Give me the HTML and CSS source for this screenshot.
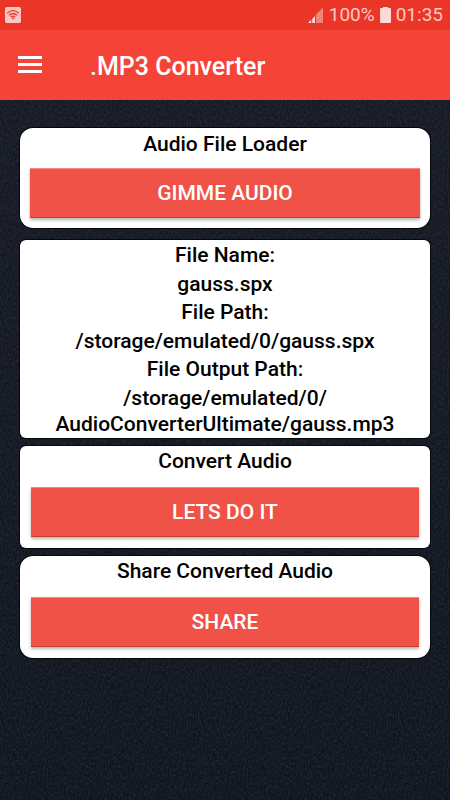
FILE: index.html
```html
<!DOCTYPE html>
<html lang="en">
<head>
    <meta charset="UTF-8">
    <meta name="viewport" content="width=device-width, initial-scale=1.0">
    <title>.MP3 Converter</title>
    <link rel="stylesheet" href="styles.css">
</head>
<body>
    <div class="status-bar">
        <svg class="wifi-icon" width="16" height="16" viewBox="0 0 16 16">
            <rect width="16" height="16" rx="2" fill="#fbc7c3"/>
            <g fill="none" stroke="#ee3a2b" stroke-width="1.3">
                <path d="M2.2 6.2Q8 1 13.8 6.2"/>
                <path d="M4 8.3Q8 4.8 12 8.3"/>
                <path d="M5.7 10.2Q8 8.3 10.3 10.2"/>
            </g>
            <path d="M6.6 11.3Q8 10.4 9.4 11.3L8 12.8z" fill="#ee3a2b"/>
        </svg>
        <div class="status-right">
            <svg class="signal-icon" width="16" height="16" viewBox="0 0 16 16">
                <path d="M15 0.5V16H8V7.5z" fill="#f4837a"/>
                <path d="M3.2 12.8V16H0z" fill="#fddad7"/>
                <path d="M7 9V16H4.2V12z" fill="#fddad7"/>
            </svg>
            <span>100%</span>
            <svg class="battery-icon" width="11" height="16" viewBox="0 0 11 16">
                <path d="M3 0h5v1h2a1 1 0 0 1 1 1V15a1 1 0 0 1-1 1H1a1 1 0 0 1-1-1V2a1 1 0 0 1 1-1h2z" fill="#fddad7"/>
            </svg>
            <span>01:35</span>
        </div>
    </div>
    <header class="toolbar">
        <button class="menu-button" aria-label="Menu">
            <svg width="24" height="18" viewBox="0 0 24 18">
                <path d="M0 0h24v3H0zM0 7h24v3H0zM0 14h24v3H0z" fill="#fff"/>
            </svg>
        </button>
        <h1>.MP3 Converter</h1>
    </header>
    <main class="content">
        <section class="card card-round card-loader">
            <h2>Audio File Loader</h2>
            <button class="action">GIMME AUDIO</button>
        </section>
        <dl class="card file-info">
            <div>
                <dt>File Name:</dt>
                <dd>gauss.spx</dd>
            </div>
            <div>
                <dt>File Path:</dt>
                <dd>/storage/emulated/0/gauss.spx</dd>
            </div>
            <div>
                <dt>File Output Path:</dt>
                <dd>/storage/emulated/0/<wbr>AudioConverterUltimate/gauss.mp3</dd>
            </div>
        </dl>
        <section class="card">
            <h2>Convert Audio</h2>
            <button class="action">LETS DO IT</button>
        </section>
        <section class="card card-round">
            <h2>Share Converted Audio</h2>
            <button class="action">SHARE</button>
        </section>
    </main>
</body>
</html>
```

FILE: styles.css
```css
* {
    box-sizing: border-box;
}
body {
    font-family: Roboto, "Liberation Sans", sans-serif;
    margin: 0;
    min-height: 100vh;
    background-color: #181d27;
    /* fabric grain over a soft dark fade */
    background-image: url("data:image/svg+xml,%3Csvg xmlns='http://www.w3.org/2000/svg' width='200' height='200'%3E%3Cfilter id='n' x='0' y='0' width='1' height='1' color-interpolation-filters='sRGB'%3E%3CfeTurbulence type='fractalNoise' baseFrequency='.7 .35' numOctaves='2' stitchTiles='stitch'/%3E%3CfeColorMatrix values='0 0 0 0 .4 0 0 0 0 .4 0 0 0 0 .45 .5 0 0 0 -.19'/%3E%3C/filter%3E%3Crect width='200' height='200' filter='url(%23n)'/%3E%3C/svg%3E"), linear-gradient(#161a24, #0f151f);
}
h1, h2, dl, dd {
    margin: 0;
}
button {
    font-family: inherit;
    border: none;
    cursor: pointer;
}
.status-bar {
    display: flex;
    justify-content: space-between;
    align-items: center;
    height: 30px;
    padding: 0 7px 0 5px;
    background-color: #eb3527;
    color: #fcc9c5;
    font-size: 19px;
    line-height: 32px;
}
.status-right {
    display: flex;
    align-items: center;
    gap: 5px;
}
.toolbar {
    display: flex;
    align-items: center;
    gap: 48px;
    height: 70px;
    padding: 0 18px;
    background-color: #f54437;
    color: #fff;
}
.toolbar h1 {
    font-size: 25px;
    font-weight: 500;
    line-height: 32px;
    padding-top: 3px;
}
.menu-button {
    display: flex;
    padding: 0;
    background: none;
}
.content {
    display: flex;
    flex-direction: column;
    gap: 8px;
    padding: 28px 20px;
}
.card {
    padding: 2px 11px 11px;
    border-radius: 6px;
    background-color: #fff;
    box-shadow: 0 0 0 1px #05070b;
    color: #000;
    font-size: 21px;
    font-weight: 500;
    line-height: 26px;
    text-align: center;
}
.card-round {
    border-radius: 13px;
}
.card-loader {
    padding: 3px 10px 10px;
    margin-bottom: 4px;
}
.card h2 {
    font-size: 21px;
    font-weight: 500;
    line-height: 26px;
    margin-bottom: 13px;
}
.card-loader h2 {
    margin-bottom: 11px;
}
.action {
    display: block;
    width: 100%;
    height: 50px;
    padding: 0;
    background-color: #f05248;
    color: #fff;
    font-size: 21px;
    font-weight: 500;
    box-shadow: inset 0 1px #f4877f, inset 0 -1px #c93c34, 0 2px 3px rgba(0, 0, 0, 0.3);
}
.file-info {
    display: flex;
    flex-direction: column;
    gap: 2px;
    padding: 2px 11px 1px;
}
.file-info dt {
    margin-bottom: 3px;
}
.action:hover {
    background-color: #e0463c;
}
```
